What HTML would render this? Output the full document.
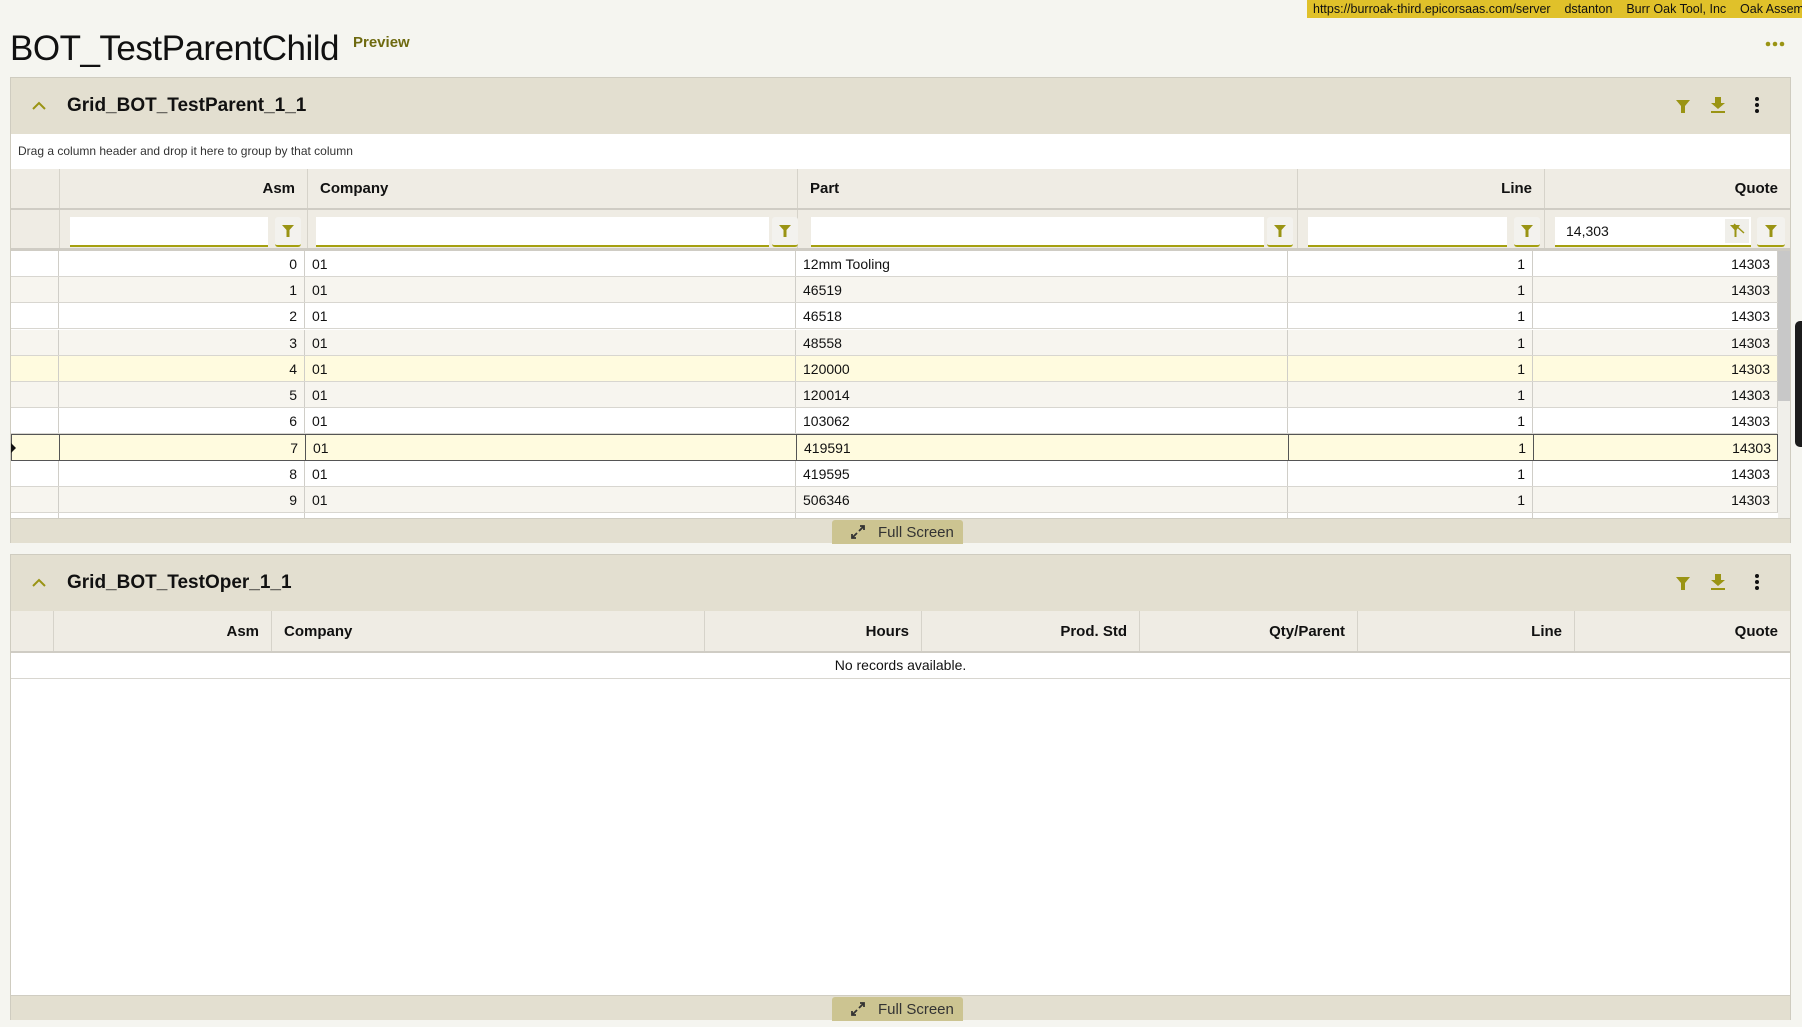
<!DOCTYPE html>
<html><head><meta charset="utf-8">
<style>
*{box-sizing:border-box;margin:0;padding:0}
body{width:1802px;height:1027px;background:#f5f5f0;font-family:"Liberation Sans",sans-serif;color:#111;position:relative;overflow:hidden}
.abs{position:absolute}
.topbar{left:1307px;top:0;width:495px;height:18px;background:#e0c12a;font-size:12.5px;line-height:18px;padding-left:6px;white-space:nowrap;overflow:hidden;color:#111}
.title{left:10px;top:29px;font-size:35px;letter-spacing:-0.5px}
.preview{left:353px;top:34px;font-size:15px;font-weight:bold;color:#6e6a10}
.panel{left:10px;width:1781px;border:1px solid #cfccc0;background:#fff}
.ph{position:absolute;left:0;top:0;width:100%;background:#e3dfd0}
.ptitle{position:absolute;left:56px;font-size:19px;font-weight:bold}
.chev{position:absolute;left:20px}
.hdr{position:absolute;background:#efece4;border-bottom:2px solid #cfccc4;font-size:15px;font-weight:bold}
.hc{position:absolute;top:0;height:100%;border-right:1px solid #d6d3ca;padding:0 12px;display:flex;align-items:center}
.r{justify-content:flex-end}
.row{position:absolute;left:0;width:1767px;height:26px;border-bottom:1px solid #d8d6d0;font-size:14px}
.c{position:absolute;top:0;height:100%;border-right:1px solid #d0cec8;display:flex;align-items:center;padding:0 7px}
.inp{position:absolute;top:7px;height:30px;background:#fff;border-bottom:2px solid #a5a010}
.fb{position:absolute;top:7px;width:26px;height:30px;background:#f3f2ee;border-bottom:2px solid #a5a010;border-radius:3px;display:flex;align-items:center;justify-content:center}
.foot{position:absolute;left:0;width:100%;background:#e3dfd0;border-top:1px solid #d0cdc2}
.fsbtn{position:absolute;left:821px;top:1px;width:131px;height:24px;background:#ccc491;border-radius:3px 3px 0 0;font-size:15px;color:#333;display:flex;align-items:center;padding-left:18px;gap:12px}
</style></head><body>
<div class="abs topbar">https://burroak-third.epicorsaas.com/server &nbsp;&nbsp; dstanton &nbsp;&nbsp; Burr Oak Tool, Inc &nbsp;&nbsp; Oak Assembly</div>
<div class="abs title">BOT_TestParentChild</div>
<div class="abs preview">Preview</div>
<svg class="abs" style="left:1765px;top:41px" width="20" height="6"><circle cx="3" cy="3" r="2.3" fill="#9a9414"/><circle cx="10" cy="3" r="2.3" fill="#9a9414"/><circle cx="17" cy="3" r="2.3" fill="#9a9414"/></svg>

<!-- Panel 1 -->
<div class="abs panel" style="top:77px;height:466px">
 <div class="ph" style="height:56px">
  <svg class="chev" style="top:22px" width="16" height="12"><path d="M2 9 L8 3 L14 9" stroke="#9a9414" stroke-width="2" fill="none"/></svg>
  <div class="ptitle" style="top:17px">Grid_BOT_TestParent_1_1</div>
  <svg style="position:absolute;left:1664px;top:20px" width="16" height="16"><path d="M1 2 H15 L10 8 V15 H6 V8 Z" fill="#9a9414"/></svg>
  <svg style="position:absolute;left:1699px;top:18px" width="16" height="18"><path d="M5 1 H11 V7 H15 L8 13 L1 7 H5 Z" fill="#9a9414"/><rect x="1" y="15" width="14" height="2" fill="#9a9414"/></svg>
  <svg style="position:absolute;left:1743px;top:18px" width="6" height="18"><circle cx="3" cy="3" r="2" fill="#111"/><circle cx="3" cy="9" r="2" fill="#111"/><circle cx="3" cy="15" r="2" fill="#111"/></svg>
 </div>
 <div style="position:absolute;left:7px;top:66px;font-size:12px;color:#333">Drag a column header and drop it here to group by that column</div>
 <div class="hdr" style="left:0;top:91px;width:1779px;height:41px">
  <div class="hc" style="left:0;width:49px"></div>
  <div class="hc r" style="left:49px;width:248px">Asm</div>
  <div class="hc" style="left:297px;width:490px">Company</div>
  <div class="hc" style="left:787px;width:500px">Part</div>
  <div class="hc r" style="left:1287px;width:247px">Line</div>
  <div class="hc r" style="left:1534px;width:245px;border-right:none">Quote</div>
 </div>
 <div class="hdr" style="left:0;top:132px;width:1779px;height:41px;border-bottom:3px solid #cfccc4">
  <div class="hc" style="left:0;width:49px"></div>
  <div class="hc" style="left:49px;width:248px"></div>
  <div class="hc" style="left:297px;width:490px"></div>
  <div class="hc" style="left:787px;width:500px"></div>
  <div class="hc" style="left:1287px;width:247px"></div>
  <div class="hc" style="left:1534px;width:245px;border-right:none"></div>
  <div class="inp" style="left:59px;width:198px"></div><div class="fb" style="left:264px"><svg width="14" height="14"><path d="M1 1 H13 L8.5 6 V13 H5.5 V6 Z" fill="#9a9414"/></svg></div>
  <div class="inp" style="left:305px;width:453px"></div><div class="fb" style="left:761px"><svg width="14" height="14"><path d="M1 1 H13 L8.5 6 V13 H5.5 V6 Z" fill="#9a9414"/></svg></div>
  <div class="inp" style="left:800px;width:453px"></div><div class="fb" style="left:1256px"><svg width="14" height="14"><path d="M1 1 H13 L8.5 6 V13 H5.5 V6 Z" fill="#9a9414"/></svg></div>
  <div class="inp" style="left:1297px;width:199px"></div><div class="fb" style="left:1503px"><svg width="14" height="14"><path d="M1 1 H13 L8.5 6 V13 H5.5 V6 Z" fill="#9a9414"/></svg></div>
  <div class="inp" style="left:1544px;width:196px;font-size:14px;font-weight:normal;padding:6px 0 0 11px">14,303<div style="position:absolute;right:2px;top:2px;width:24px;height:24px;background:#f0efea;display:flex;align-items:center;justify-content:center"><svg width="16" height="16"><path d="M1 2 H11 L7.5 7 V14 H5.5 V7 Z" fill="#9a9414"/><path d="M5 1 L15 10" stroke="#9a9414" stroke-width="1.5"/></svg></div></div>
  <div class="fb" style="left:1746px;width:28px"><svg width="14" height="14"><path d="M1 1 H13 L8.5 6 V13 H5.5 V6 Z" fill="#9a9414"/></svg></div>
 </div>
 <div style="position:absolute;left:0;top:173px;width:1779px;height:267px;overflow:hidden;background:#fff">
  <div style="position:absolute;left:1767px;top:0;width:12px;height:267px;background:#f0efea"></div>
  <div style="position:absolute;left:1767px;top:0;width:12px;height:150px;background:#c8c8c8"></div>
  <div class="row" style="top:0;background:#fff"><div class="c" style="left:0;width:48px"></div><div class="c r" style="left:48px;width:246px">0</div><div class="c" style="left:294px;width:491px">01</div><div class="c" style="left:785px;width:492px">12mm Tooling</div><div class="c r" style="left:1277px;width:245px">1</div><div class="c r" style="left:1522px;width:245px">14303</div></div>
  <div class="row" style="top:26px;background:#f7f5ef"><div class="c" style="left:0;width:48px"></div><div class="c r" style="left:48px;width:246px">1</div><div class="c" style="left:294px;width:491px">01</div><div class="c" style="left:785px;width:492px">46519</div><div class="c r" style="left:1277px;width:245px">1</div><div class="c r" style="left:1522px;width:245px">14303</div></div>
  <div class="row" style="top:52px;background:#fff"><div class="c" style="left:0;width:48px"></div><div class="c r" style="left:48px;width:246px">2</div><div class="c" style="left:294px;width:491px">01</div><div class="c" style="left:785px;width:492px">46518</div><div class="c r" style="left:1277px;width:245px">1</div><div class="c r" style="left:1522px;width:245px">14303</div></div>
  <div class="row" style="top:79px;background:#f7f5ef"><div class="c" style="left:0;width:48px"></div><div class="c r" style="left:48px;width:246px">3</div><div class="c" style="left:294px;width:491px">01</div><div class="c" style="left:785px;width:492px">48558</div><div class="c r" style="left:1277px;width:245px">1</div><div class="c r" style="left:1522px;width:245px">14303</div></div>
  <div class="row" style="top:105px;background:#fffbdf"><div class="c" style="left:0;width:48px"></div><div class="c r" style="left:48px;width:246px">4</div><div class="c" style="left:294px;width:491px">01</div><div class="c" style="left:785px;width:492px">120000</div><div class="c r" style="left:1277px;width:245px">1</div><div class="c r" style="left:1522px;width:245px">14303</div></div>
  <div class="row" style="top:131px;background:#f7f5ef"><div class="c" style="left:0;width:48px"></div><div class="c r" style="left:48px;width:246px">5</div><div class="c" style="left:294px;width:491px">01</div><div class="c" style="left:785px;width:492px">120014</div><div class="c r" style="left:1277px;width:245px">1</div><div class="c r" style="left:1522px;width:245px">14303</div></div>
  <div class="row" style="top:157px;background:#fff"><div class="c" style="left:0;width:48px"></div><div class="c r" style="left:48px;width:246px">6</div><div class="c" style="left:294px;width:491px">01</div><div class="c" style="left:785px;width:492px">103062</div><div class="c r" style="left:1277px;width:245px">1</div><div class="c r" style="left:1522px;width:245px">14303</div></div>
  <div class="row" style="top:183px;background:#fffbdf;border:1px solid #555;height:27px"><div class="c" style="left:0;width:48px;border-right-color:#555"><svg width="5" height="10" style="margin-left:-8px"><path d="M0 0 L5 5 L0 10Z" fill="#111"/></svg></div><div class="c r" style="left:48px;width:246px;border-right-color:#555">7</div><div class="c" style="left:294px;width:491px;border-right-color:#555">01</div><div class="c" style="left:785px;width:492px;border-right-color:#555">419591</div><div class="c r" style="left:1277px;width:245px;border-right-color:#555">1</div><div class="c r" style="left:1522px;width:244px;border-right:none">14303</div></div>
  <div class="row" style="top:210px;background:#fff"><div class="c" style="left:0;width:48px"></div><div class="c r" style="left:48px;width:246px">8</div><div class="c" style="left:294px;width:491px">01</div><div class="c" style="left:785px;width:492px">419595</div><div class="c r" style="left:1277px;width:245px">1</div><div class="c r" style="left:1522px;width:245px">14303</div></div>
  <div class="row" style="top:236px;background:#f7f5ef"><div class="c" style="left:0;width:48px"></div><div class="c r" style="left:48px;width:246px">9</div><div class="c" style="left:294px;width:491px">01</div><div class="c" style="left:785px;width:492px">506346</div><div class="c r" style="left:1277px;width:245px">1</div><div class="c r" style="left:1522px;width:245px">14303</div></div>
  <div class="row" style="top:262px;background:#fff"><div class="c" style="left:0;width:48px"></div><div class="c" style="left:48px;width:246px"></div><div class="c" style="left:294px;width:491px"></div><div class="c" style="left:785px;width:492px"></div><div class="c" style="left:1277px;width:245px"></div></div>
 </div>
 <div class="foot" style="top:440px;height:25px">
  <div class="fsbtn"><svg width="16" height="16"><path d="M9 7 L14 2 M10 2 H14 V6 M7 9 L2 14 M2 10 V14 H6" stroke="#333" stroke-width="1.8" fill="none"/></svg>Full Screen</div>
 </div>
</div>

<!-- Panel 2 -->
<div class="abs panel" style="top:554px;height:466px">
 <div class="ph" style="height:56px">
  <svg class="chev" style="top:22px" width="16" height="12"><path d="M2 9 L8 3 L14 9" stroke="#9a9414" stroke-width="2" fill="none"/></svg>
  <div class="ptitle" style="top:17px">Grid_BOT_TestOper_1_1</div>
  <svg style="position:absolute;left:1664px;top:20px" width="16" height="16"><path d="M1 2 H15 L10 8 V15 H6 V8 Z" fill="#9a9414"/></svg>
  <svg style="position:absolute;left:1699px;top:18px" width="16" height="18"><path d="M5 1 H11 V7 H15 L8 13 L1 7 H5 Z" fill="#9a9414"/><rect x="1" y="15" width="14" height="2" fill="#9a9414"/></svg>
  <svg style="position:absolute;left:1743px;top:18px" width="6" height="18"><circle cx="3" cy="3" r="2" fill="#111"/><circle cx="3" cy="9" r="2" fill="#111"/><circle cx="3" cy="15" r="2" fill="#111"/></svg>
 </div>
 <div class="hdr" style="left:0;top:56px;width:1779px;height:42px">
  <div class="hc" style="left:0;width:43px"></div>
  <div class="hc r" style="left:43px;width:218px">Asm</div>
  <div class="hc" style="left:261px;width:433px">Company</div>
  <div class="hc r" style="left:694px;width:217px">Hours</div>
  <div class="hc r" style="left:911px;width:218px">Prod. Std</div>
  <div class="hc r" style="left:1129px;width:218px">Qty/Parent</div>
  <div class="hc r" style="left:1347px;width:217px">Line</div>
  <div class="hc r" style="left:1564px;width:215px;border-right:none">Quote</div>
 </div>
 <div style="position:absolute;left:0;top:98px;width:1779px;height:26px;border-bottom:1px solid #d8d6d0;font-size:14px;text-align:center;line-height:25px">No records available.</div>
 <div class="foot" style="top:440px;height:25px">
  <div class="fsbtn"><svg width="16" height="16"><path d="M9 7 L14 2 M10 2 H14 V6 M7 9 L2 14 M2 10 V14 H6" stroke="#333" stroke-width="1.8" fill="none"/></svg>Full Screen</div>
 </div>
</div>

<div class="abs" style="left:1795px;top:321px;width:12px;height:126px;background:#1c1c1c;border-radius:5px 0 0 5px"></div>
</body></html>
